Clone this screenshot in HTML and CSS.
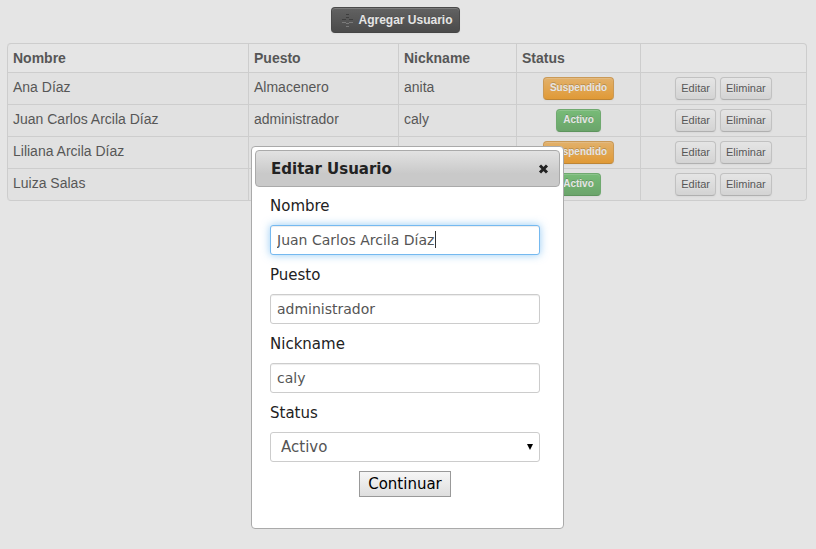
FILE: index.html
```html
<!DOCTYPE html>
<html lang="es">
<head>
<meta charset="utf-8">
<meta name="viewport" content="width=device-width, initial-scale=1">
<title>Usuarios</title>
<link rel="stylesheet" href="styles.css">
</head>
<body>
<main class="page">
  <div class="toolbar">
    <button type="button" class="btn btn-inverse">
      <svg class="move-icon" width="14" height="14" viewBox="0 0 14 14" aria-hidden="true">
        <path class="move-dark" d="M5 1h3v1H5zM5 4h3v1H5zM1 6h4v1H1zM8 6h4v1H8z"/>
        <path class="move-light" d="M1 9h4v1H1zM8 9h4v1H8zM5 10h3v1H5zM5 13h3v1H5z"/>
      </svg>
      Agregar Usuario
    </button>
  </div>
  <table class="users">
    <colgroup>
      <col class="col-name"><col class="col-job"><col class="col-nick"><col class="col-status"><col>
    </colgroup>
    <thead>
      <tr><th>Nombre</th><th>Puesto</th><th>Nickname</th><th>Status</th><th></th></tr>
    </thead>
    <tbody>
      <tr>
        <td>Ana Díaz</td><td>Almacenero</td><td>anita</td>
        <td class="centered"><button type="button" class="btn btn-mini btn-warning">Suspendido</button></td>
        <td><div class="actions"><button type="button" class="btn btn-mini">Editar</button><button type="button" class="btn btn-mini">Eliminar</button></div></td>
      </tr>
      <tr>
        <td>Juan Carlos Arcila Díaz</td><td>administrador</td><td>caly</td>
        <td class="centered"><button type="button" class="btn btn-mini btn-success">Activo</button></td>
        <td><div class="actions"><button type="button" class="btn btn-mini">Editar</button><button type="button" class="btn btn-mini">Eliminar</button></div></td>
      </tr>
      <tr>
        <td>Liliana Arcila Díaz</td><td></td><td></td>
        <td class="centered"><button type="button" class="btn btn-mini btn-warning">Suspendido</button></td>
        <td><div class="actions"><button type="button" class="btn btn-mini">Editar</button><button type="button" class="btn btn-mini">Eliminar</button></div></td>
      </tr>
      <tr>
        <td>Luiza Salas</td><td></td><td></td>
        <td class="centered"><button type="button" class="btn btn-mini btn-success">Activo</button></td>
        <td><div class="actions"><button type="button" class="btn btn-mini">Editar</button><button type="button" class="btn btn-mini">Eliminar</button></div></td>
      </tr>
    </tbody>
  </table>
</main>

<div class="overlay">
  <section class="dialog" role="dialog" aria-labelledby="dialog-title">
    <header class="titlebar">
      <h2 id="dialog-title">Editar Usuario</h2>
      <button type="button" class="close" aria-label="Cerrar">
        <svg width="11" height="10" viewBox="0 0 11 10" aria-hidden="true"><path d="M2 1.5l7 7M9 1.5l-7 7"/></svg>
      </button>
    </header>
    <form class="form">
      <label for="nombre">Nombre</label>
      <input id="nombre" class="field field-active" type="text" value="Juan Carlos Arcila Díaz">
      <label for="puesto">Puesto</label>
      <input id="puesto" class="field" type="text" value="administrador">
      <label for="nickname">Nickname</label>
      <input id="nickname" class="field" type="text" value="caly">
      <label for="status">Status</label>
      <div class="select-wrap">
        <select id="status" class="field"><option>Activo</option><option>Suspendido</option></select>
        <svg class="arrow" width="6" height="6" viewBox="0 0 6 6" aria-hidden="true"><path d="M0 0h6L3 6z"/></svg>
      </div>
      <button type="button" class="submit">Continuar</button>
    </form>
  </section>
</div>
</body>
</html>
```
FILE: styles.css
```css
* {
  box-sizing: border-box;
}

body {
  margin: 0;
  background: #fff;
  color: #333;
  font: 14px/20px "Liberation Sans", Arial, sans-serif;
}

.page {
  padding: 7px 9px 0 7px;
}

.toolbar {
  display: flex;
  justify-content: center;
  margin-bottom: 10px;
  padding-right: 23px;
}

/* Buttons */
.btn {
  border: 1px solid #bbb;
  border-color: #ccc #ccc #b3b3b3;
  border-radius: 4px;
  background: linear-gradient(#fff, #e6e6e6);
  box-shadow: inset 0 1px 0 rgba(255, 255, 255, .2), 0 1px 2px rgba(0, 0, 0, .05);
  color: #333;
  font: 12px/20px "Liberation Sans", Arial, sans-serif;
  text-shadow: 0 1px 1px rgba(255, 255, 255, .75);
}

.btn-mini {
  height: 23px;
  padding: 0 5px 1px;
  font-size: 11px;
}

.btn-inverse,
.btn-warning,
.btn-success {
  color: #fff;
  font-weight: bold;
  text-shadow: 0 -1px 0 rgba(0, 0, 0, .25);
}

.btn-inverse {
  display: flex;
  align-items: center;
  gap: 3px;
  height: 26px;
  padding: 0 6px 0 9px;
  border-color: #222 #222 #1a1a1a;
  background: linear-gradient(#444, #222);
}

.btn-warning,
.btn-success {
  padding: 0 6px 1px;
  font-size: 10px;
}

.btn-warning {
  border-color: #d99332 #d99332 #c67605;
  background: linear-gradient(#fbb450, #f89406);
}

.btn-success {
  border-color: #57a957 #57a957 #3d8b3d;
  background: linear-gradient(#62c462, #51a351);
}

.move-dark {
  fill: #111;
}

.move-light {
  fill: #666;
}

/* Users table */
.users {
  width: 100%;
  table-layout: fixed;
  border: 1px solid #ddd;
  border-left: 0;
  border-radius: 4px;
  border-spacing: 0;
}

.col-name { width: 241px; }
.col-job { width: 150px; }
.col-nick { width: 118px; }
.col-status { width: 124px; }

.users th,
.users td {
  padding: 4px 5px;
  border-left: 1px solid #ddd;
  text-align: left;
  vertical-align: top;
}

.users td {
  border-top: 1px solid #ddd;
  background: #f9f9f9;
}

.users td.centered {
  text-align: center;
  line-height: 0;
}

.users th:first-child {
  border-top-left-radius: 4px;
}

.users tr:last-child td:first-child {
  border-bottom-left-radius: 4px;
}

.users tr:last-child td:last-child {
  border-bottom-right-radius: 4px;
}

.actions {
  display: flex;
  justify-content: center;
  gap: 4px;
}

/* Dialog */
.overlay {
  position: fixed;
  inset: 0;
  display: flex;
  justify-content: center;
  align-items: flex-start;
  padding: 146px 1px 0 0;
  background: rgba(170, 170, 170, .3);
}

.dialog {
  width: 313px;
  padding: 3px;
  border: 1px solid #aaa;
  border-radius: 4px;
  background: #fff;
  color: #222;
  font: 15px/20px "DejaVu Sans", Verdana, sans-serif;
}

.titlebar {
  display: flex;
  align-items: center;
  justify-content: space-between;
  height: 37px;
  padding: 0 10px 0 15px;
  border: 1px solid #aaa;
  border-radius: 4px;
  background: linear-gradient(#e2e2e2, #c9c9c9 65%, #c9c9c9);
}

.titlebar h2 {
  margin: 0;
  font-size: 15px;
  line-height: 20px;
}

.close {
  display: flex;
  padding: 0;
  border: 0;
  background: none;
}

.close path {
  fill: none;
  stroke: #222;
  stroke-width: 3;
}

.form {
  display: flex;
  flex-direction: column;
  padding: 0 20px 28px 15px;
}

.form label {
  padding: 9px 0;
}

.field + label {
  margin-top: 1px;
}

.field {
  width: 100%;
  height: 30px;
  padding: 4px 6px;
  border: 1px solid #ccc;
  border-radius: 3px;
  outline: 0;
  background: #fff;
  box-shadow: inset 0 1px 1px rgba(0, 0, 0, .075);
  color: #555;
  font: 14px/20px "DejaVu Sans", Verdana, sans-serif;
}

/* The active field shows its text cursor after the value */
.field-active {
  border-color: #75b9f0;
  background: linear-gradient(#333, #333) 164px 5px / 1px 17px no-repeat #fff;
  box-shadow: inset 0 1px 1px rgba(0, 0, 0, .075), 0 0 8px rgba(82, 168, 236, .6);
}

.select-wrap {
  position: relative;
}

select.field {
  display: block;
  padding: 4px 10px;
  appearance: none;
  box-shadow: none;
  font-size: 15px;
}

.arrow {
  position: absolute;
  top: 12px;
  right: 7px;
  pointer-events: none;
}

.submit {
  align-self: center;
  height: 26px;
  margin-top: 9px;
  padding: 0 8px;
  border: 1px solid #999;
  border-radius: 0;
  background: linear-gradient(#f6f6f6, #dedede);
  color: #000;
  font: 15px/20px "DejaVu Sans", Verdana, sans-serif;
}
```
